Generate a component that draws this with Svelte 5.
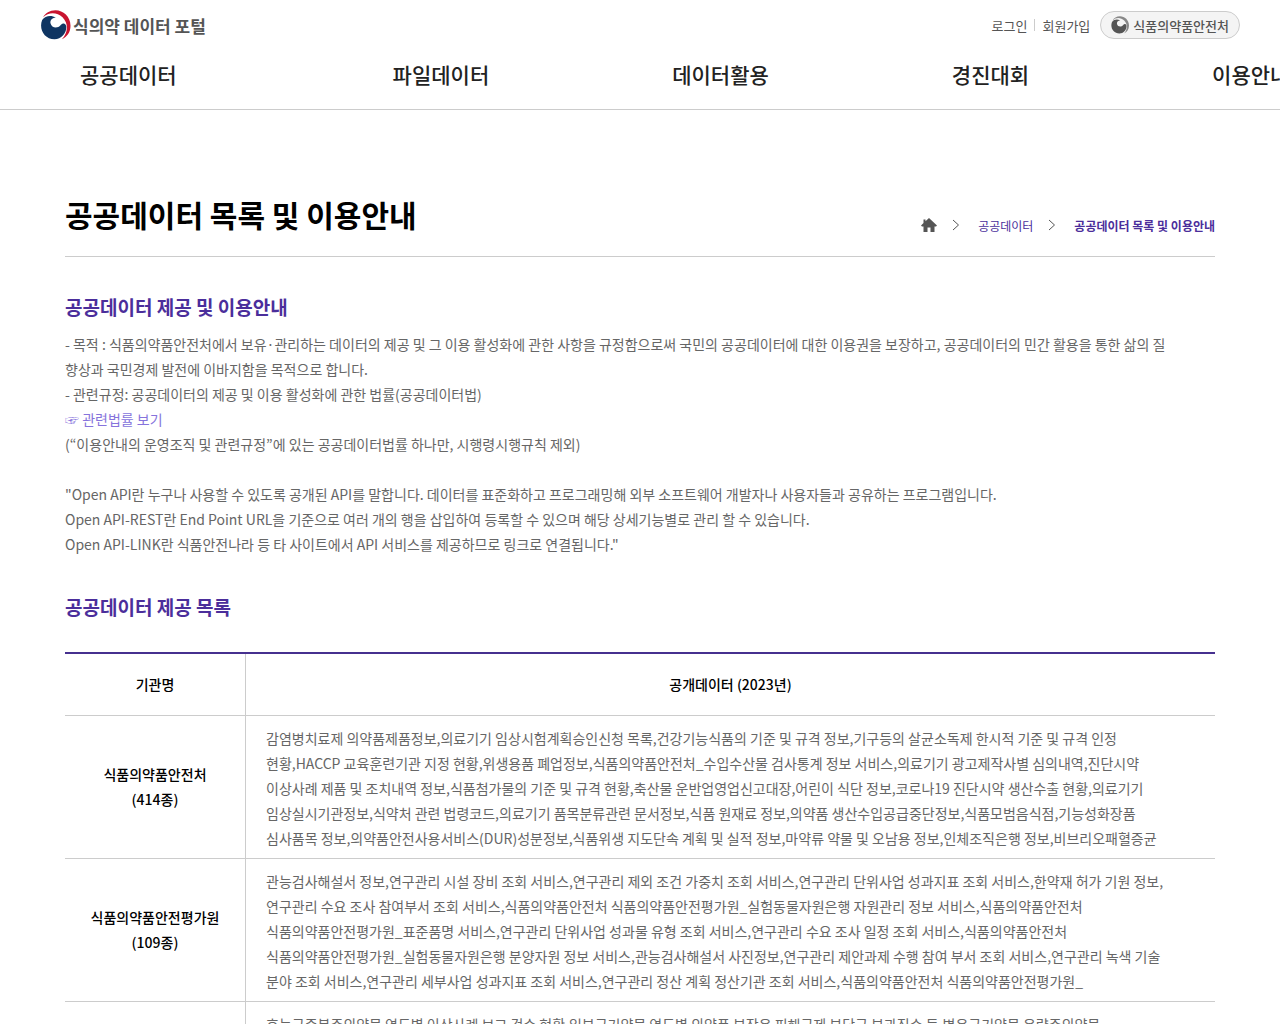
<script>
  const menu = ['공공데이터', '파일데이터', '데이터활용', '경진대회', '이용안내'];

  const rows = [
    {
      name: '식품의약품안전처',
      count: '(414종)',
      data: '감염병치료제 의약품제품정보,의료기기 임상시험계획승인신청 목록,건강기능식품의 기준 및 규격 정보,기구등의 살균소독제 한시적 기준 및 규격 인정 현황,HACCP 교육훈련기관 지정 현황,위생용품 폐업정보,식품의약품안전처_수입수산물 검사통계 정보 서비스,의료기기 광고제작사별 심의내역,진단시약 이상사례 제품 및 조치내역 정보,식품첨가물의 기준 및 규격 현황,축산물 운반업영업신고대장,어린이 식단 정보,코로나19 진단시약 생산수출 현황,의료기기 임상실시기관정보,식약처 관련 법령코드,의료기기 품목분류관련 문서정보,식품 원재료 정보,의약품 생산수입공급중단정보,식품모범음식점,기능성화장품 심사품목 정보,의약품안전사용서비스(DUR)성분정보,식품위생 지도단속 계획 및 실적 정보,마약류 약물 및 오남용 정보,인체조직은행 정보,비브리오패혈증균'
    },
    {
      name: '식품의약품안전평가원',
      count: '(109종)',
      data: '관능검사해설서 정보,연구관리 시설 장비 조회 서비스,연구관리 제외 조건 가중치 조회 서비스,연구관리 단위사업 성과지표 조회 서비스,한약재 허가 기원 정보,연구관리 수요 조사 참여부서 조회 서비스,식품의약품안전처 식품의약품안전평가원_실험동물자원은행 자원관리 정보 서비스,식품의약품안전처 식품의약품안전평가원_표준품명 서비스,연구관리 단위사업 성과물 유형 조회 서비스,연구관리 수요 조사 일정 조회 서비스,식품의약품안전처 식품의약품안전평가원_실험동물자원은행 분양자원 정보 서비스,관능검사해설서 사진정보,연구관리 제안과제 수행 참여 부서 조회 서비스,연구관리 녹색 기술 분야 조회 서비스,연구관리 세부사업 성과지표 조회 서비스,연구관리 정산 계획 정산기관 조회 서비스,식품의약품안전처 식품의약품안전평가원_'
    },
    {
      name: '',
      count: '',
      data: '효능군중복주의약물 연도별 이상사례 보고 건수 현황,일부금기약물 연도별 의약품 부작용 피해구제 부담금 부과징수 등,병용금기약물 용량주의약물'
    }
  ];
</script>

{#snippet emblem(crescent, swirl)}
  <svg viewBox="0 0 90 90" aria-hidden="true">
    <path fill={crescent} d="M8 22C24 5 50 6 66 22 84 40 84 68 64 88 80 80 90 66 90 47 90 20 68 1 45 1 28 1 14 10 8 22Z" />
    <path fill={swirl} d="M5 30C14 17 32 14 46 23 35 23 28 31 30 40 33 55 52 56 60 46 66 38 75 38 77 48 80 67 64 87 42 88 12 88-6 57 5 30Z" />
  </svg>
{/snippet}

<div class="page">
  <header>
    <div class="top">
      <a class="logo" href="#home">
        {@render emblem('#c8142f', '#0f3562')}
        <span>식의약 데이터 포털</span>
      </a>
      <div class="util">
        <a href="#login">로그인</a>
        <a class="join" href="#join">회원가입</a>
        <a class="agency" href="#mfds">
          {@render emblem('#888', '#555')}
          <span>식품의약품안전처</span>
        </a>
      </div>
    </div>
    <nav>
      {#each menu as item}
        <a href="#menu">{item}</a>
      {/each}
    </nav>
  </header>

  <main>
    <div class="title">
      <h1>공공데이터 목록 및 이용안내</h1>
      <div class="crumbs">
        <a class="home" href="#home" aria-label="홈">
          <svg viewBox="0 0 16 14" aria-hidden="true">
            <path fill="#555" d="M8 0 16 7.5 15 8.500H13.500V14H9.500V9.500H6.500V14H2.500V8.500H1L0 7.500 2.500 5V1.500H4.500V3.200Z" />
          </svg>
        </a>
        <svg class="arrow" viewBox="0 0 8 12" aria-hidden="true"><path d="M1 1 6.500 6 1 11" /></svg>
        <a href="#data">공공데이터</a>
        <svg class="arrow" viewBox="0 0 8 12" aria-hidden="true"><path d="M1 1 6.500 6 1 11" /></svg>
        <a class="current" href="#list">공공데이터 목록 및 이용안내</a>
      </div>
    </div>

    <h2>공공데이터 제공 및 이용안내</h2>
    <p>
      - 목적 : 식품의약품안전처에서 보유·관리하는 데이터의 제공 및 그 이용 활성화에 관한 사항을 규정함으로써 국민의 공공데이터에 대한 이용권을 보장하고, 공공데이터의 민간 활용을 통한 삶의 질 향상과 국민경제 발전에 이바지함을 목적으로 합니다.<br />
      - 관련규정: 공공데이터의 제공 및 이용 활성화에 관한 법률(공공데이터법)<br />
      <a href="#law">☞ 관련법률 보기</a><br />
      (“이용안내의 운영조직 및 관련규정”에 있는 공공데이터법률 하나만, 시행령시행규칙 제외)
    </p>
    <p class="api">
      "Open API란 누구나 사용할 수 있도록 공개된 API를 말합니다. 데이터를 표준화하고 프로그래밍해 외부 소프트웨어 개발자나 사용자들과 공유하는 프로그램입니다.<br />
      Open API-REST란 End Point URL을 기준으로 여러 개의 행을 삽입하여 등록할 수 있으며 해당 상세기능별로 관리 할 수 있습니다.<br />
      Open API-LINK란 식품안전나라 등 타 사이트에서 API 서비스를 제공하므로 링크로 연결됩니다."
    </p>

    <h2>공공데이터 제공 목록</h2>
    <table>
      <thead>
        <tr><th scope="col">기관명</th><th scope="col">공개데이터 (2023년)</th></tr>
      </thead>
      <tbody>
        {#each rows as row}
          <tr>
            <th scope="row">{row.name}<br />{row.count}</th>
            <td>{row.data}</td>
          </tr>
        {/each}
      </tbody>
    </table>
  </main>
</div>

<style>
  :global(body) {
    margin: 0;
    background: #fff;
  }
  .page {
    height: 100vh;
    overflow: hidden;
    font-family: 'Noto Sans CJK KR', 'Noto Sans', sans-serif;
    font-size: 14px;
    line-height: 25px;
    color: #555;
    word-break: keep-all;
  }
  a {
    color: inherit;
    text-decoration: none;
  }
  header {
    border-bottom: 1px solid #ccc;
  }
  .top {
    display: flex;
    justify-content: space-between;
    align-items: center;
    height: 50px;
    padding: 0 40px;
  }
  .logo {
    display: flex;
    align-items: center;
    gap: 2px;
    font-size: 17px;
    font-weight: 700;
  }
  .logo svg {
    width: 31px;
    height: 30px;
  }
  .util {
    display: flex;
    align-items: center;
    font-size: 13px;
  }
  .join {
    display: flex;
    align-items: center;
    gap: 7px;
    margin-left: 7px;
  }
  .join::before {
    content: '';
    height: 12px;
    border-left: 1px solid #ccc;
  }
  .agency {
    display: flex;
    align-items: center;
    gap: 4px;
    margin-left: 10px;
    padding: 0 10px;
    height: 26px;
    border: 1px solid #ccc;
    border-radius: 14px;
    background: #f4f4f4;
    font-weight: 500;
  }
  .agency svg {
    width: 18px;
    height: 18px;
  }
  nav {
    display: flex;
    gap: 183px;
    height: 59px;
    padding-left: 80px;
    overflow: hidden;
    white-space: nowrap;
    font-size: 21px;
    line-height: 48px;
    font-weight: 500;
    color: #222;
  }
  nav a:first-child {
    padding-right: 33px;
  }
  main {
    max-width: 1150px;
    margin: 0 auto;
    padding: 82px 40px 0;
  }
  .title {
    display: flex;
    justify-content: space-between;
    align-items: center;
    height: 64px;
    border-bottom: 1px solid #ccc;
  }
  h1 {
    margin: 0;
    padding-bottom: 20px;
    font-size: 30px;
    line-height: 40px;
    font-weight: 700;
    color: #000;
  }
  .crumbs {
    display: flex;
    align-items: center;
    padding-top: 2px;
    font-size: 12px;
    color: #4b2e9b;
  }
  .home,
  .home svg {
    display: block;
    width: 16px;
    height: 14px;
  }
  .arrow {
    width: 8px;
    height: 12px;
    margin: 0 18px 0 15px;
    fill: none;
    stroke: #555;
  }
  .current {
    font-weight: 700;
  }
  h2 {
    margin: 0;
    padding: 35px 0 10px;
    font-size: 19px;
    line-height: 30px;
    font-weight: 700;
    color: #4b2e9b;
  }
  p {
    margin: 0;
    padding-right: 20px;
    color: #666;
  }
  p a {
    color: #8673dc;
  }
  .api {
    margin-top: 25px;
  }
  table {
    width: 100%;
    margin-top: 20px;
    border-top: 2px solid #46308f;
    border-spacing: 0;
    table-layout: fixed;
  }
  th,
  td {
    border-bottom: 1px solid #ccc;
  }
  th {
    padding: 0;
    font-weight: 500;
    color: #000;
  }
  th:first-child {
    width: 180px;
    border-right: 1px solid #ccc;
  }
  thead th {
    height: 61px;
  }
  td {
    padding: 10px 35px 7px 20px;
    vertical-align: top;
    color: #666;
  }
</style>
